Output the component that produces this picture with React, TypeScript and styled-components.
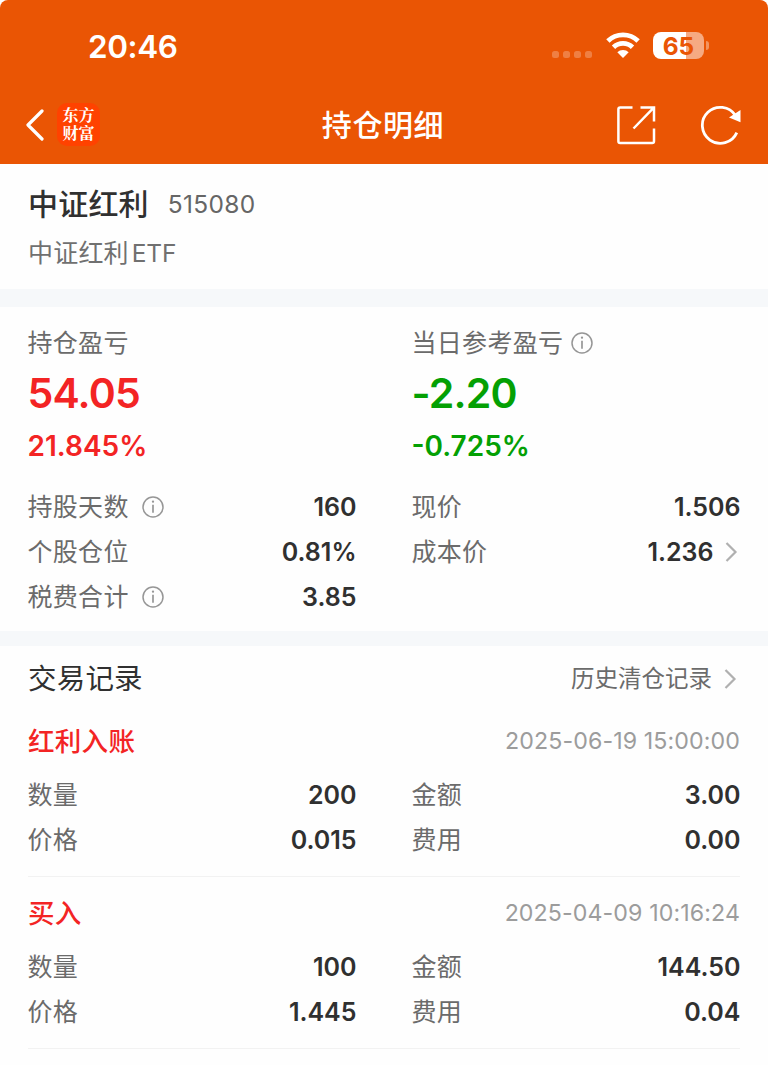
import React from "react";
import styled, { createGlobalStyle } from "styled-components";

const GlobalStyle = createGlobalStyle`
  * { box-sizing: border-box; }
  body {
    margin: 0;
    background: #fff;
    font-family: Inter, "Noto Sans CJK SC", sans-serif;
    -webkit-font-smoothing: antialiased;
  }
`;

const Page = styled.div`
  width: 768px;
  height: 1065px;
  overflow: hidden;
  background: #fefefe;
`;

const Header = styled.header`
  height: 164px;
  background: #ea5504;
  border-radius: 8px 8px 0 0;
  color: #fff;
`;

const StatusBar = styled.div`
  display: flex;
  align-items: center;
  justify-content: space-between;
  height: 86px;
  padding: 6px 59px 0 88px;
`;

const Clock = styled.span`
  padding-top: 1px;
  font-size: 31.5px;
  font-weight: 600;
  line-height: 40px;
  letter-spacing: -0.4px;
`;

const StatusIcons = styled.div`
  display: flex;
  align-items: center;
  margin-top: -2px;
  svg { display: block; }
`;

const Dots = styled.div`
  display: flex;
  gap: 4px;
  margin: 18px 14px 0 0;
`;

const Dot = styled.i`
  width: 7px;
  height: 7px;
  border-radius: 2.5px;
  background: rgba(255, 255, 255, 0.25);
`;

const Battery = styled.div`
  width: 51px;
  height: 27px;
  margin-left: 13px;
  border-radius: 8px;
  background: linear-gradient(90deg, #fff 65%, #f6aa82 65%);
  color: #ea5504;
  font-size: 24.5px;
  font-weight: 700;
  line-height: 28px;
  text-align: center;
`;

const BatteryCap = styled.i`
  width: 3px;
  height: 9px;
  margin-left: 2px;
  border-radius: 0 4px 4px 0;
  background: #f3945f;
`;

const NavBar = styled.nav`
  display: grid;
  grid-template-columns: 1fr auto 1fr;
  align-items: center;
  height: 77px;
  padding: 0 27px 0 25px;
  svg { display: block; }
`;

const NavSide = styled.div<{ $end?: boolean }>`
  display: flex;
  align-items: center;
  justify-content: ${(p) => (p.$end ? "flex-end" : "flex-start")};
  gap: ${(p) => (p.$end ? 44 : 11)}px;
`;

const Brand = styled.div`
  width: 43px;
  height: 43px;
  padding: 3px 0 0;
  border-radius: 10px;
  background: #ff4200;
  font-family: "Noto Serif CJK SC", "Noto Sans CJK SC", serif;
  font-size: 16px;
  font-weight: 700;
  line-height: 18px;
  text-align: center;
`;

const NavTitle = styled.h1`
  margin: 0;
  font-size: 30px;
  font-weight: 500;
  line-height: 40px;
  letter-spacing: 0.6px;
`;

const Security = styled.section`
  height: 125px;
  padding: 17px 28px 0;
`;

const SecurityTitle = styled.div`
  display: flex;
  align-items: center;
  height: 46px;
`;

const SecurityName = styled.h2`
  margin: 0 19px 0 0;
  color: #303030;
  font-size: 30px;
  font-weight: 500;
  line-height: 46px;
  letter-spacing: 0.2px;
`;

const SecurityCode = styled.span`
  color: #666;
  font-size: 24.5px;
  line-height: 44px;
  letter-spacing: 0.3px;
`;

const SecurityFund = styled.div`
  display: flex;
  gap: 3px;
  padding-top: 1px;
  color: #707070;
  font-size: 25px;
  line-height: 50px;
  letter-spacing: 0.2px;
`;

const FundSuffix = styled.span`
  font-size: 24.5px;
  letter-spacing: -0.2px;
`;

const Band = styled.div<{ $height: number }>`
  height: ${(p) => p.$height}px;
  background: #f6f8fa;
`;

const Columns = styled.div`
  display: grid;
  grid-template-columns: 329px 329px;
  column-gap: 55px;
  margin-left: -0.5px;
`;

const Summary = styled.section`
  height: 324px;
  padding: 14px 28px 0;
`;

const Profit = styled.div<{ $color: string }>`
  height: 163px;
  color: ${(p) => p.$color};
`;

const Label = styled.span<{ $gap?: number }>`
  display: flex;
  align-items: center;
  gap: ${(p) => p.$gap ?? 13}px;
  height: 45px;
  color: #6b6b6b;
  font-size: 25px;
  font-weight: 400;
  line-height: 47px;
  letter-spacing: 0.3px;
  svg { display: block; margin-top: -1px; }
`;

const Amount = styled.div`
  font-size: 41px;
  font-weight: 600;
  line-height: 55px;
  letter-spacing: -0.8px;
`;

const Percent = styled.div`
  font-size: 28px;
  font-weight: 600;
  line-height: 50px;
`;

const Row = styled.div`
  display: flex;
  align-items: center;
  justify-content: space-between;
  height: 45px;
  padding-top: 1px;
`;

const Value = styled.span`
  display: flex;
  align-items: center;
  gap: 11px;
  color: #303030;
  font-size: 25px;
  font-weight: 600;
  line-height: 47px;
  svg { display: block; margin-top: -1px; }
`;

const RecordsHeader = styled.div`
  display: flex;
  align-items: center;
  justify-content: space-between;
  height: 59px;
  padding: 7px 28px 0;
`;

const RecordsTitle = styled.h2`
  margin: 0;
  color: #303030;
  font-size: 28.5px;
  font-weight: 400;
  line-height: 54px;
  letter-spacing: 0.2px;
`;

const HistoryLink = styled.a`
  display: flex;
  align-items: center;
  gap: 12px;
  color: #6b6b6b;
  font-size: 23.5px;
  line-height: 54px;
`;

const Record = styled.article`
  height: 172px;
  margin: 0 28px;
  padding-top: 9px;
  border-bottom: 1px solid #f2f2f2;
`;

const RecordHead = styled.div`
  display: flex;
  align-items: center;
  justify-content: space-between;
  height: 54px;
  margin-bottom: 4px;
`;

const RecordKind = styled.h3`
  margin: 0;
  color: #f32424;
  font-size: 26.5px;
  font-weight: 500;
  line-height: 56px;
  letter-spacing: 0.3px;
`;

const RecordTime = styled.time`
  color: #9c9c9c;
  font-size: 23.2px;
  line-height: 56px;
  letter-spacing: 0.1px;
`;

const Info = () => (
  <svg width="22" height="22" viewBox="0 0 22 22" fill="none" stroke="#969696">
    <circle cx="11" cy="11" r="10" strokeWidth="1.5" />
    <path d="M11 8.7v8" strokeWidth="1.7" />
    <circle cx="11" cy="5.7" r="1.15" fill="#969696" stroke="none" />
  </svg>
);

const Chevron = () => (
  <svg width="16" height="20" viewBox="0 0 16 20" fill="none" stroke="#b0b0b0" strokeWidth="2.2">
    <path d="M1.5 1l9 9-9 9" />
  </svg>
);

const Wifi = () => (
  <svg width="34" height="26" viewBox="0 0 34 26" fill="none" stroke="#fff" strokeWidth="4.8">
    <path d="M1.9 9a21.6 21.6 0 0 1 30.2 0" />
    <path d="M7.5 15.2a13.6 13.6 0 0 1 19 0" />
    <path d="M17 26l-5.7-5.7a8 8 0 0 1 11.4 0z" fill="#fff" stroke="none" />
  </svg>
);

const Back = () => (
  <svg width="21" height="32" viewBox="0 0 21 32" fill="none" stroke="#fff" strokeWidth="3.2" strokeLinecap="round" strokeLinejoin="round">
    <path d="M17 2L3 16l14 14" />
  </svg>
);

const Share = () => (
  <svg width="40" height="40" viewBox="0 0 40 40" fill="none" stroke="#fff" strokeWidth="2.5">
    <path d="M16.5 2.4H4.2Q2.4 2.4 2.4 4.2v32q0 1.8 1.8 1.8h32q1.8 0 1.8-1.8V23.5" />
    <path d="M24.5 2.4H38v14M38 2.4L17.5 23.5" />
  </svg>
);

const Refresh = () => (
  <svg width="41" height="40" viewBox="0 0 41 40" fill="none" stroke="#fff" strokeWidth="2.8">
    <path d="M36.8 27.6A18 18 0 1 1 35.5 10.6" />
    <path d="M40.5 5v12.2L29 12.6z" fill="#fff" stroke="none" />
  </svg>
);

type FieldProps = { label: string; value: string; info?: boolean; link?: boolean };

const Field = ({ label, value, info, link }: FieldProps) => (
  <Row>
    <Label>{label}{info && <Info />}</Label>
    <Value>{value}{link && <Chevron />}</Value>
  </Row>
);

const records = [
  { kind: "红利入账", time: "2025-06-19 15:00:00", count: "200", price: "0.015", amount: "3.00", fee: "0.00" },
  { kind: "买入", time: "2025-04-09 10:16:24", count: "100", price: "1.445", amount: "144.50", fee: "0.04" },
];

export default function App() {
  return (
    <Page>
      <GlobalStyle />
      <Header>
        <StatusBar>
          <Clock>20:46</Clock>
          <StatusIcons>
            <Dots><Dot /><Dot /><Dot /><Dot /></Dots>
            <Wifi />
            <Battery>65</Battery>
            <BatteryCap />
          </StatusIcons>
        </StatusBar>
        <NavBar>
          <NavSide>
            <Back />
            <Brand>东方<br />财富</Brand>
          </NavSide>
          <NavTitle>持仓明细</NavTitle>
          <NavSide $end>
            <Share />
            <Refresh />
          </NavSide>
        </NavBar>
      </Header>

      <Security>
        <SecurityTitle>
          <SecurityName>中证红利</SecurityName>
          <SecurityCode>515080</SecurityCode>
        </SecurityTitle>
        <SecurityFund>中证红利<FundSuffix>ETF</FundSuffix></SecurityFund>
      </Security>
      <Band $height={18} />

      <Summary>
        <Columns>
          <Profit $color="#f32424">
            <Label>持仓盈亏</Label>
            <Amount>54.05</Amount>
            <Percent>21.845%</Percent>
          </Profit>
          <Profit $color="#04a004">
            <Label $gap={8}>当日参考盈亏<Info /></Label>
            <Amount>-2.20</Amount>
            <Percent>-0.725%</Percent>
          </Profit>
        </Columns>
        <Columns>
          <div>
            <Field label="持股天数" value="160" info />
            <Field label="个股仓位" value="0.81%" />
            <Field label="税费合计" value="3.85" info />
          </div>
          <div>
            <Field label="现价" value="1.506" />
            <Field label="成本价" value="1.236" link />
          </div>
        </Columns>
      </Summary>
      <Band $height={15} />

      <RecordsHeader>
        <RecordsTitle>交易记录</RecordsTitle>
        <HistoryLink>历史清仓记录<Chevron /></HistoryLink>
      </RecordsHeader>
      {records.map((r) => (
        <Record key={r.time}>
          <RecordHead>
            <RecordKind>{r.kind}</RecordKind>
            <RecordTime>{r.time}</RecordTime>
          </RecordHead>
          <Columns>
            <div>
              <Field label="数量" value={r.count} />
              <Field label="价格" value={r.price} />
            </div>
            <div>
              <Field label="金额" value={r.amount} />
              <Field label="费用" value={r.fee} />
            </div>
          </Columns>
        </Record>
      ))}
    </Page>
  );
}
